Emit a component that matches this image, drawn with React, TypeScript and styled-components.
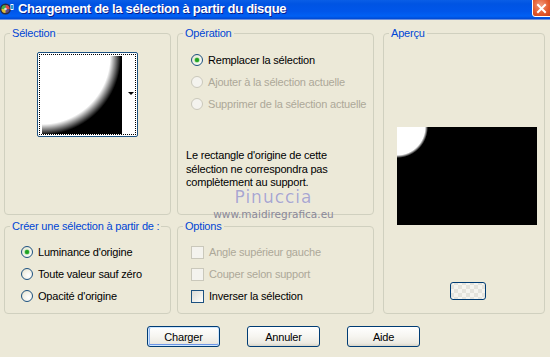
import styled, { createGlobalStyle } from 'styled-components';

const GlobalStyle = createGlobalStyle`
  html, body {
    margin: 0;
    padding: 0;
    background: #ece9d8;
  }
  body {
    font-family: "Liberation Sans", Arial, sans-serif;
    font-size: 11px;
    letter-spacing: -0.2px;
    color: #000;
  }
`;

const Window = styled.div`
  width: 550px;
  height: 357px;
  background: #ece9d8;
  overflow: hidden;
  display: flex;
  flex-direction: column;
`;

const TitleBar = styled.div`
  height: 19px;
  display: flex;
  align-items: flex-start;
  overflow: hidden;
  background: linear-gradient(
    #0a5ee6 0%,
    #0054e3 20%,
    #0056ea 60%,
    #0060f4 85%,
    #0048d2 100%
  );
  border-bottom: 1px solid #6d8fd8;
`;

const TitleIcon = styled.svg`
  width: 14px;
  height: 14px;
  margin: 2px 4px 0 0;
  flex: none;
`;

const TitleText = styled.div`
  font-family: "Liberation Sans", Arial, sans-serif;
  font-size: 13px;
  font-weight: 700;
  letter-spacing: -0.3px;
  color: #fff;
  line-height: 18px;
  text-shadow: 1px 1px 0 #0a1e8c;
  flex: 1;
`;

const CloseButton = styled.div`
  width: 21px;
  height: 20px;
  margin: -3px -3px 0 0;
  flex: none;
  border: 1px solid #fff;
  border-radius: 3px;
  background: radial-gradient(circle at 40% 40%, #f39a7c 0%, #e2572a 55%, #c63c16 100%);
  display: flex;
  align-items: center;
  justify-content: center;
  box-sizing: border-box;
  padding: 2px 2px 0 0;
`;

const Body = styled.div`
  position: relative;
  padding: 7px 2px 0 4px;
  display: flex;
  flex-direction: column;
`;

const Groups = styled.div`
  display: grid;
  grid-template-columns: 167px 197px 165px;
  grid-template-rows: 188px 94px;
  column-gap: 6px;
  row-gap: 5px;
  & > :nth-child(3) {
    grid-column: 3;
    grid-row: 1 / span 2;
    margin-left: 3px;
  }
`;

const Group = styled.fieldset`
  margin: 0;
  padding: 0;
  border: 1px solid #d0d0bf;
  border-radius: 4px;
  min-width: 0;
  box-sizing: border-box;
`;

const Legend = styled.legend`
  color: #0046d5;
  padding: 0 2px;
  margin-left: 5px;
  line-height: 13px;
  white-space: nowrap;
`;

const Content = styled.div<{ $pad?: string }>`
  padding: ${(p) => p.$pad || '0'};
  display: flex;
  flex-direction: column;
`;

const Thumb = styled.div`
  align-self: center;
  width: 101px;
  height: 85px;
  box-sizing: border-box;
  border: 1px solid #1c5180;
  border-radius: 2px;
  background: #fff;
  padding: 1px;
  display: flex;
`;

const Dotted = styled.div`
  flex: 1;
  border: 1px dotted #000;
  padding: 1px 0 0 2px;
  display: flex;
`;

const ThumbImage = styled.div`
  width: 80px;
  height: 78px;
  background: radial-gradient(circle at 0 0, #fff 0, #fff 68px, #000 79px);
`;

const ThumbSide = styled.div`
  flex: 1;
  display: flex;
  align-items: center;
  justify-content: flex-end;
  padding-right: 1px;
  padding-bottom: 3px;
`;

const Arrow = styled.div`
  width: 0;
  height: 0;
  border-left: 3px solid transparent;
  border-right: 3px solid transparent;
  border-top: 3px solid #000;
`;

const OptionRow = styled.div<{ $disabled?: boolean }>`
  display: flex;
  align-items: center;
  gap: 5px;
  height: 22px;
  color: ${(p) => (p.$disabled ? '#aca899' : '#000')};
`;

const Radio = styled.span<{ $checked?: boolean; $disabled?: boolean }>`
  width: 12px;
  height: 12px;
  box-sizing: border-box;
  border-radius: 50%;
  flex: none;
  border: 1px solid ${(p) => (p.$disabled ? '#cac8bb' : '#1c5180')};
  background: ${(p) =>
    p.$disabled
      ? '#f4f3ee'
      : 'radial-gradient(circle at 65% 65%, #ffffff 0%, #f1efe2 60%, #d6d3c4 100%)'};
  display: flex;
  align-items: center;
  justify-content: center;
  &::after {
    content: '';
    width: 4px;
    height: 4px;
    border-radius: 50%;
    background: #21a121;
    box-shadow: 0 0 1px 0.5px #5ec85e;
    display: ${(p) => (p.$checked ? 'block' : 'none')};
  }
`;

const Check = styled.span<{ $disabled?: boolean }>`
  width: 13px;
  height: 13px;
  box-sizing: border-box;
  flex: none;
  border: 1px solid ${(p) => (p.$disabled ? '#cac8bb' : '#1c5180')};
  background: ${(p) =>
    p.$disabled ? '#f4f3ee' : 'linear-gradient(135deg, #dcdcd7 0%, #f4f4f0 70%, #ffffff 100%)'};
`;

const Note = styled.p`
  margin: 34px 0 0 -5px;
  line-height: 13.5px;
`;

const Preview = styled.div`
  width: 140px;
  height: 98px;
  margin: 87px 0 0 13px;
  background: radial-gradient(circle at 0 0, #fff 0, #fff 28px, #000 31px);
`;

const SmallButton = styled.div`
  width: 36px;
  height: 18px;
  box-sizing: border-box;
  margin: 57px 0 0 66px;
  border: 1px solid #003c74;
  border-radius: 3px;
  background-color: #f5f4ef;
  background-image: linear-gradient(45deg, #e4e3dc 25%, transparent 25%, transparent 75%, #e4e3dc 75%),
    linear-gradient(45deg, #e4e3dc 25%, transparent 25%, transparent 75%, #e4e3dc 75%);
  background-size: 8px 8px;
  background-position: 0 0, 4px 4px;
  background-origin: content-box;
  padding: 2px 3px;
`;

const Watermark = styled.div`
  position: absolute;
  left: 211px;
  top: 169px;
  width: 125px;
  display: flex;
  flex-direction: column;
  align-items: center;
  pointer-events: none;
`;

const WmName = styled.div`
  font-family: "DejaVu Sans", Verdana, sans-serif;
  font-size: 17px;
  letter-spacing: 1px;
  color: #a9a7cc;
  text-shadow: 0 0 1px #fff;
  line-height: 16px;
`;

const WmUrl = styled.div`
  font-family: "DejaVu Sans", Verdana, sans-serif;
  font-size: 10.5px;
  letter-spacing: 0;
  color: #8a8898;
  line-height: 12px;
  margin-top: 3px;
`;

const ButtonRow = styled.div`
  display: flex;
  gap: 27px;
  padding-left: 143px;
  margin-top: 12px;
`;

const Button = styled.button<{ $default?: boolean }>`
  width: 73px;
  height: 21px;
  box-sizing: border-box;
  font-family: "Liberation Sans", Arial, sans-serif;
  font-size: 11px;
  letter-spacing: -0.2px;
  color: #000;
  border: 1px solid #003c74;
  border-radius: 3px;
  background: linear-gradient(#ffffff 0%, #f6f5f0 50%, #eceae2 85%, #d8d5c8 100%);
  box-shadow: ${(p) =>
    p.$default
      ? 'inset 0 0 0 1px #cee7ff, inset 0 -1px 0 1px #6d96e6, inset 1px 0 0 1px #94b7f0'
      : 'none'};
  padding: 0;
`;

export default function App() {
  return (
    <Window>
      <GlobalStyle />
      <TitleBar>
        <TitleIcon viewBox="0 0 14 14">
          <circle cx="5.5" cy="7" r="5.5" fill="#2a2a3a" />
          <circle cx="5.5" cy="7" r="4" fill="#5a4a8a" />
          <path d="M5.5 3 A4 4 0 0 1 9.5 7 L5.5 7 Z" fill="#e04848" />
          <path d="M1.5 7 A4 4 0 0 1 5.5 3 L5.5 7 Z" fill="#40b040" />
          <path d="M5.5 11 A4 4 0 0 1 1.5 7 L5.5 7 Z" fill="#e0c030" />
          <circle cx="5.5" cy="7" r="1.3" fill="#ddd" />
          <rect x="10.5" y="2" width="3" height="6" fill="#fff" />
          <rect x="11" y="3" width="2" height="4" fill="#2aa0d0" />
        </TitleIcon>
        <TitleText>Chargement de la sélection à partir du disque</TitleText>
        <CloseButton>
          <svg width="11" height="11" viewBox="0 0 11 11">
            <path d="M2 2 L9 9 M9 2 L2 9" stroke="#fff" strokeWidth="2" strokeLinecap="square" />
          </svg>
        </CloseButton>
      </TitleBar>

      <Body>
        <Groups>
          <Group>
            <Legend>Sélection</Legend>
            <Content $pad="12px 0 0 0">
              <Thumb>
                <Dotted>
                  <ThumbImage />
                  <ThumbSide>
                    <Arrow />
                  </ThumbSide>
                </Dotted>
              </Thumb>
            </Content>
          </Group>

          <Group>
            <Legend>Opération</Legend>
            <Content $pad="9px 0 0 13px">
              <OptionRow>
                <Radio $checked />
                Remplacer la sélection
              </OptionRow>
              <OptionRow $disabled>
                <Radio $disabled />
                Ajouter à la sélection actuelle
              </OptionRow>
              <OptionRow $disabled>
                <Radio $disabled />
                Supprimer de la sélection actuelle
              </OptionRow>
              <Note>
                Le rectangle d'origine de cette
                <br />
                sélection ne correspondra pas
                <br />
                complètement au support.
              </Note>
            </Content>
          </Group>

          <Group>
            <Legend>Aperçu</Legend>
            <Content>
              <Preview />
              <SmallButton />
            </Content>
          </Group>

          <Group>
            <Legend>Créer une sélection à partir de :</Legend>
            <Content $pad="8px 0 0 16px">
              <OptionRow>
                <Radio $checked />
                Luminance d'origine
              </OptionRow>
              <OptionRow>
                <Radio />
                Toute valeur sauf zéro
              </OptionRow>
              <OptionRow>
                <Radio />
                Opacité d'origine
              </OptionRow>
            </Content>
          </Group>

          <Group>
            <Legend>Options</Legend>
            <Content $pad="8px 0 0 13px">
              <OptionRow $disabled>
                <Check $disabled />
                Angle supérieur gauche
              </OptionRow>
              <OptionRow $disabled>
                <Check $disabled />
                Couper selon support
              </OptionRow>
              <OptionRow>
                <Check />
                Inverser la sélection
              </OptionRow>
            </Content>
          </Group>
        </Groups>

        <Watermark>
          <WmName>Pinuccia</WmName>
          <WmUrl>www.maidiregrafica.eu</WmUrl>
        </Watermark>

        <ButtonRow>
          <Button $default>Charger</Button>
          <Button>Annuler</Button>
          <Button>Aide</Button>
        </ButtonRow>
      </Body>
    </Window>
  );
}
